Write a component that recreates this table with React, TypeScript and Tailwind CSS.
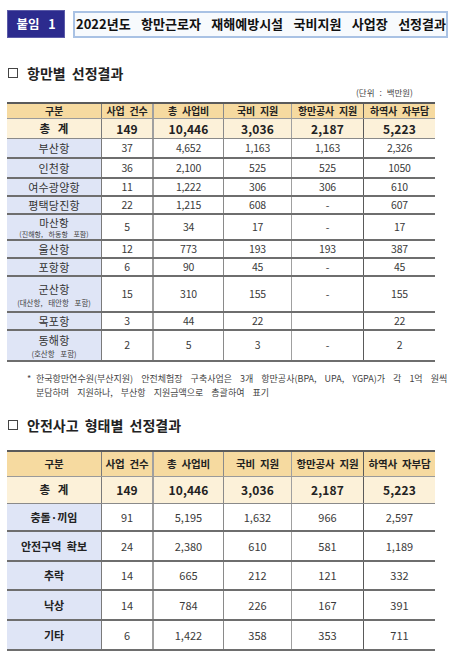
import React from "react";

const W = ["w-[95px]", "w-[52px]", "w-[70px]", "w-[68px]", "w-[72px]", "w-[71px]"];
const BR = [
  "border-r border-[#7a7a7a]",
  "border-r-2 border-[#a0a0a0]",
  "border-r border-[#8a8a8a]",
  "border-r border-[#a0a0a0]",
  "border-r border-[#5a5a5a]",
  "",
];

const HEAD = ["구분", "사업 건수", "총 사업비", "국비 지원", "항만공사 지원", "하역사 자부담"];
const TOTAL = ["총 계", "149", "10,446", "3,036", "2,187", "5,223"];

type Row = { label: string; sub?: string; vals: string[]; h: string; tight?: boolean };

const T1: Row[] = [
  { label: "부산항", vals: ["37", "4,652", "1,163", "1,163", "2,326"], h: "h-[20px]" },
  { label: "인천항", vals: ["36", "2,100", "525", "525", "1050"], h: "h-[20px]" },
  { label: "여수광양항", vals: ["11", "1,222", "306", "306", "610"], h: "h-[18px]" },
  { label: "평택당진항", vals: ["22", "1,215", "608", "-", "607"], h: "h-[18px]" },
  { label: "마산항", sub: "(진해항, 하동항 포함)", vals: ["5", "34", "17", "-", "17"], h: "h-[26px]", tight: true },
  { label: "울산항", vals: ["12", "773", "193", "193", "387"], h: "h-[18px]" },
  { label: "포항항", vals: ["6", "90", "45", "-", "45"], h: "h-[18px]" },
  { label: "군산항", sub: "(대산항, 태안항 포함)", vals: ["15", "310", "155", "-", "155"], h: "h-[36px]" },
  { label: "목포항", vals: ["3", "44", "22", "", "22"], h: "h-[18px]" },
  { label: "동해항", sub: "(호산항 포함)", vals: ["2", "5", "3", "-", "2"], h: "h-[31px]" },
];

const T2: Row[] = [
  { label: "충돌·끼임", vals: ["91", "5,195", "1,632", "966", "2,597"], h: "h-[28px]" },
  { label: "안전구역 확보", vals: ["24", "2,380", "610", "581", "1,189"], h: "h-[30px]" },
  { label: "추락", vals: ["14", "665", "212", "121", "332"], h: "h-[29px]" },
  { label: "낙상", vals: ["14", "784", "226", "167", "391"], h: "h-[30px]" },
  { label: "기타", vals: ["6", "1,422", "358", "353", "711"], h: "h-[30px]" },
];

const FONT = "font-['Noto_Sans_CJK_KR','Noto_Sans',sans-serif]";

function Table({
  rows,
  headH,
  totalH,
  big,
}: {
  rows: Row[];
  headH: string;
  totalH: string;
  big: boolean;
}) {
  return (
    <div className="w-[428px] border-t-2 border-[#5a5a5a]">
      <div className={`flex ${headH} bg-[#f6daa0] border-b border-[#9a9a9a]`}>
        {HEAD.map((t, i) => (
          <div
            key={i}
            className={`${W[i]} ${BR[i]} flex items-center justify-center font-bold text-[#222] tracking-[-0.02em] [word-spacing:3px] whitespace-nowrap leading-none ${
              big ? "text-[10.5px]" : "text-[10px]"
            }`}
          >
            {t}
          </div>
        ))}
      </div>
      <div className={`flex ${totalH} bg-[#fcf1d9] border-b border-[#8a8a8a]`}>
        {TOTAL.map((t, i) => (
          <div
            key={i}
            className={`${W[i]} ${BR[i]} flex items-center justify-center font-bold text-[#222] leading-none ${
              i === 0 ? "text-[11.5px] [word-spacing:5px]" : "text-[12px] tracking-[0.01em]"
            }`}
          >
            {t}
          </div>
        ))}
      </div>
      {rows.map((r, ri) => (
        <div key={ri} className={`flex ${r.h} border-b-2 border-[#6e6e6e]`}>
          <div
            className={`${W[0]} ${BR[0]} bg-[#dfe5f6] flex flex-col items-center justify-center text-[#333] whitespace-nowrap`}
          >
            <span
              className={
                big
                  ? "text-[11px] leading-[13px] font-bold text-[#222] [word-spacing:3px]"
                  : r.tight
                  ? "text-[10.5px] leading-[15.5px] tracking-[0.02em]"
                  : "text-[11px] leading-[16px] tracking-[0.02em]"
              }
            >
              {r.label}
            </span>
            {r.sub && (
              <span
                className={
                  r.tight
                    ? "block -mt-[1px] text-[7px] leading-[10.5px] text-[#444] [word-spacing:4px]"
                    : "block text-[7.5px] leading-[11px] text-[#444] [word-spacing:4px]"
                }
              >
                {r.sub}
              </span>
            )}
          </div>
          {r.vals.map((v, i) => (
            <div
              key={i}
              className={`${W[i + 1]} ${BR[i + 1]} flex items-center justify-center text-[#3a3a3a] leading-none ${
                big ? "text-[11px]" : "text-[10.5px] tracking-[-0.02em]"
              }`}
            >
              {v}
            </div>
          ))}
        </div>
      ))}
    </div>
  );
}

function Heading({ text }: { text: string }) {
  return (
    <div className="flex items-center h-[18px]">
      <div className="w-[10px] h-[10px] border border-[#444] ml-[1px]" />
      <span className="ml-[9px] text-[14px] font-bold text-[#222] leading-none [word-spacing:3px]">{text}</span>
    </div>
  );
}

export default function App() {
  return (
    <div className={`w-[455px] h-[663px] bg-white pl-[7px] pt-[10px] overflow-hidden ${FONT}`}>
      <div className="flex items-center">
        <div className="w-[58px] h-[28px] bg-[#2c2b8e] border border-[#5b5ba8] flex items-center justify-center text-white font-bold text-[12.5px] [word-spacing:6px]">
          붙임 1
        </div>
        <div className="ml-[8px] w-[375px] h-[27px] border-2 border-[#a9c2e4] bg-[#f7fafd] flex items-center pl-[1px] text-[13px] font-bold text-[#111] whitespace-nowrap [word-spacing:7.5px]">
          2022년도 항만근로자 재해예방시설 국비지원 사업장 선정결과
        </div>
      </div>

      <div className="mt-[26px]">
        <Heading text="항만별 선정결과" />
      </div>
      <div className="w-[428px] flex justify-end pr-[22px] h-[20px] items-center text-[8.5px] text-[#444] [word-spacing:3px]">
        (단위 : 백만원)
      </div>
      <Table rows={T1} headH="h-[15px]" totalH="h-[20px]" big={false} />

      <div className="mt-[10px] pl-[20px] text-[9px] leading-[14px] text-[#444] whitespace-nowrap [word-spacing:6px]">
        <div className="flex">
          <span className="w-[9px]">*</span>
          <span>한국항만연수원(부산지원) 안전체험장 구축사업은 3개 항만공사(BPA, UPA, YGPA)가 각 1억 원씩</span>
        </div>
        <div className="pl-[9px]">분담하며 지원하나, 부산항 지원금액으로 총괄하여 표기</div>
      </div>

      <div className="mt-[16px]">
        <Heading text="안전사고 형태별 선정결과" />
      </div>
      <div className="mt-[16px]">
        <Table rows={T2} headH="h-[25px]" totalH="h-[27px]" big={true} />
      </div>
    </div>
  );
}
